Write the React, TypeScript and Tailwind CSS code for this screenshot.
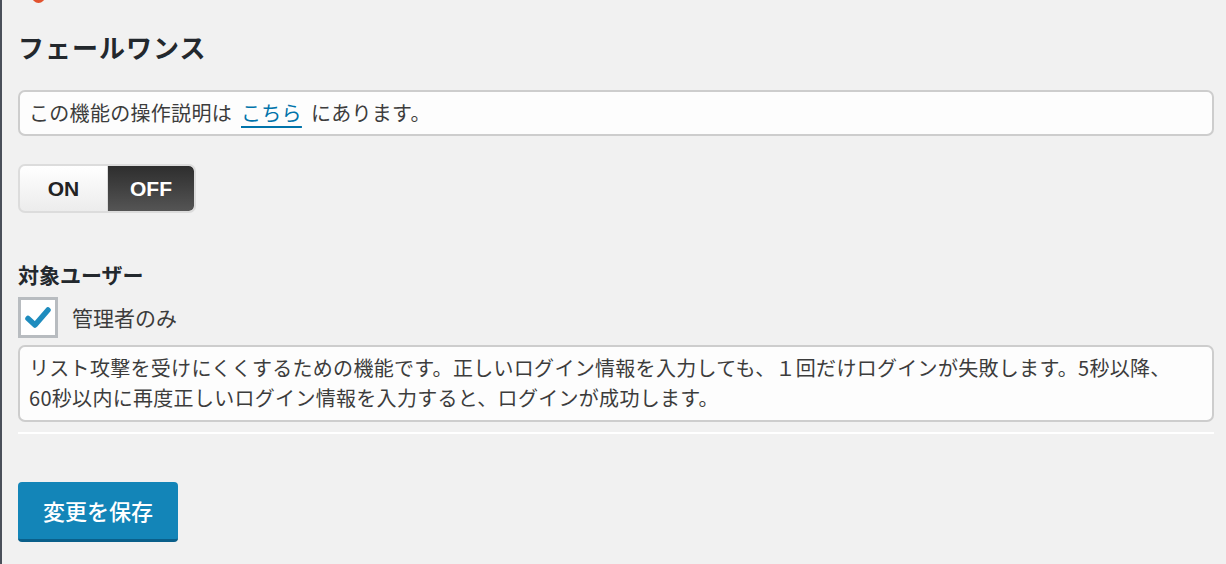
export default function App() {
  const jp = { fontFamily: '"Noto Sans CJK JP", "Noto Sans", sans-serif' };
  return (
    <div className="flex min-h-[564px] w-[1226px] bg-[#f1f1f1]" style={jp}>
      <div className="w-[2px] shrink-0 bg-[#4a505a]" />
      <div className="relative flex-1 pl-[16px] pr-[12px]">
        {/* partially visible plugin icon at top */}
        <div className="absolute left-[30px] top-[-10px] h-[13px] w-[13px] rounded-full bg-[#e2522e]" />

        <h1 className="pt-[30px] text-[26px] font-bold leading-[34px] tracking-[1px] text-[#23282d]">
          フェールワンス
        </h1>

        <div className="mt-[26px] flex h-[46px] items-center rounded-[7px] border-2 border-[#cdcdcd] bg-[#fdfdfd] px-[9px] text-[20px] tracking-[0.3px] text-[#3c3c3c]">
          <span>この機能の操作説明は</span>
          <a href="#" className="mx-[9px] text-[#0073aa] underline decoration-[2px] underline-offset-[5px]">
            こちら
          </a>
          <span>にあります。</span>
        </div>

        <div className="mt-[28px] flex h-[49px] w-[178px] overflow-hidden rounded-[7px] border-2 border-[#dcdcdc] bg-[#dcdcdc]" style={{ fontFamily: '"Liberation Sans", Arial, sans-serif' }}>
          <div className="flex w-[87px] items-center justify-center bg-gradient-to-b from-[#ffffff] to-[#ececec] text-[21px] font-bold text-[#222]">
            ON
          </div>
          <div className="ml-[1px] flex flex-1 items-center justify-center rounded-r-[5px] bg-gradient-to-b from-[#2e2e2e] to-[#555555] text-[21px] font-bold text-white">
            OFF
          </div>
        </div>

        <h2 className="mt-[46px] text-[21px] font-bold leading-[30px] text-[#23282d]">対象ユーザー</h2>

        <label className="mt-[8px] flex items-center">
          <span className="flex h-[41px] w-[40px] items-center justify-center border-[3px] border-[#b8bcc0] bg-white">
            <svg width="28" height="24" viewBox="0 0 28 24">
              <path d="M4 12.5 L11 19 L24 4" fill="none" stroke="#1e8cbe" strokeWidth="5.5" strokeLinecap="round" strokeLinejoin="round" />
            </svg>
          </span>
          <span className="ml-[14px] text-[21px] text-[#3c3c3c]">管理者のみ</span>
        </label>

        <div className="mt-[7px] rounded-[7px] border-2 border-[#cdcdcd] bg-[#fdfdfd] px-[9px] pb-[7px] pt-[6px] text-[20px] leading-[30px] tracking-[0.3px] text-[#3c3c3c]">
          リスト攻撃を受けにくくするための機能です。正しいログイン情報を入力しても、１回だけログインが失敗します。5秒以降、
          <br />
          60秒以内に再度正しいログイン情報を入力すると、ログインが成功します。
        </div>

        <div className="mt-[10px] h-[2px] bg-white" />

        <button className="mt-[48px] h-[60px] w-[160px] rounded-[4px] border-b-[3px] border-[#0a5f8a] bg-[#1385b8] text-[22px] font-medium text-white">
          変更を保存
        </button>
      </div>
    </div>
  );
}
